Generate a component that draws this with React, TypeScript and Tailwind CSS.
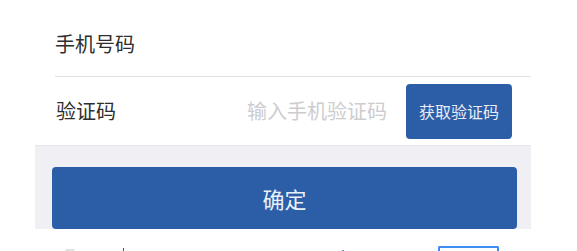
import React from "react";

export default function App() {
  return (
    <div
      className="w-[577px] h-[251px] bg-white overflow-hidden flex flex-col"
      style={{ fontFamily: '"Noto Sans CJK SC", "Noto Sans", sans-serif' }}
    >
      <div className="ml-[35px] w-[496px] flex flex-col">
        <div className="ml-[20px] h-[77px] flex items-center pt-[11px] border-b border-[#e0e0e3] text-[20px] text-[#2e2e2e] leading-none">
          手机号码
        </div>
        <div className="ml-[20px] h-[68px] flex items-center pr-[19px]">
          <div className="pl-[1px] text-[20px] text-[#2e2e2e] leading-none">验证码</div>
          <div className="flex-1" />
          <div className="text-[20px] text-[#cdcdd0] leading-none mr-[19px]">输入手机验证码</div>
          <button className="w-[106px] h-[55px] rounded-[4px] bg-[#2c5ea8] text-[#e9eef6] text-[16px] leading-none flex items-center justify-center">
            获取验证码
          </button>
        </div>
        <div className="h-[84px] bg-[#f0f0f4] pt-[21px] pl-[17px] pr-[14px] pb-[1px] border-t border-[#e8e8ec]">
          <button className="w-full h-[62px] rounded-[4px] bg-[#2c5ea8] text-[#e9f1f8] text-[22px] leading-none flex items-center justify-center">
            确定
          </button>
        </div>
      </div>
      <div className="flex items-end h-[22px] mt-auto">
        <div className="ml-[65px] w-[10px] h-[2px] rounded-t-full bg-[#e2e2e2]" />
        <div className="ml-[48px] w-[1px] h-[3px] bg-[#555555]" />
        <div className="ml-[218px] w-[2px] h-[1px] bg-[#5b8fe0]" />
        <div className="ml-[94px] w-[61px] h-[5px] border-t-[2px] border-l-[2px] border-r-[2px] border-[#3d8ef0] rounded-t-[2px]" />
      </div>
    </div>
  );
}
